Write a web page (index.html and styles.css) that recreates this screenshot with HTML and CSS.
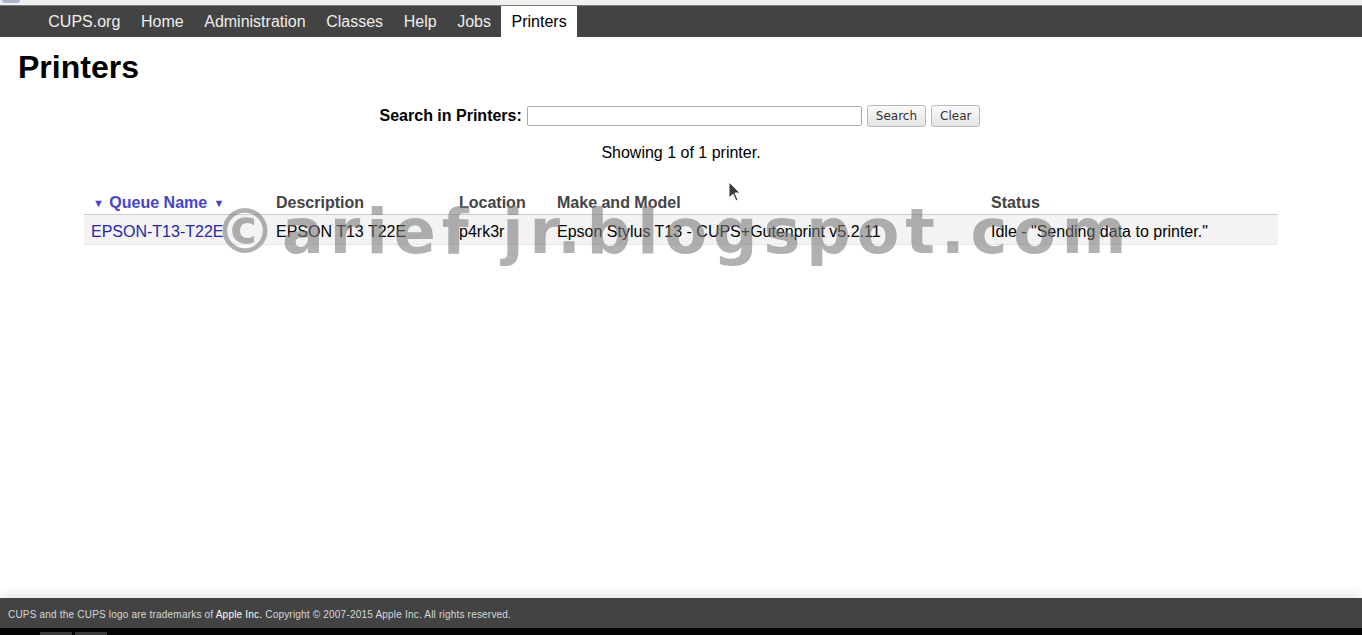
FILE: index.html
```html
<!DOCTYPE html>
<html>
	<head>
		<meta charset="UTF-8">
		<title>Printers - CUPS 2.1.0</title>
		<link rel="stylesheet" href="styles.css">
	</head>
	<body>
		<div class="topstrip"><span class="appicon"></span></div>
		<ul class="header">
			<li><a href="#">CUPS.org</a></li>
			<li><a href="#">Home</a></li>
			<li><a href="#">Administration</a></li>
			<li><a href="#">Classes</a></li>
			<li><a href="#">Help</a></li>
			<li><a href="#">Jobs</a></li>
			<li class="active"><a href="#">Printers</a></li>
		</ul>

		<div class="body">
			<h1 class="title">Printers</h1>

			<form class="search">
				<label class="search-label">Search in Printers:</label>
				<input class="search-input" type="search">
				<button class="btn" type="button">Search</button>
				<button class="btn" type="button">Clear</button>
			</form>

			<p class="count">Showing 1 of 1 printer.</p>

			<table class="list">
				<thead>
					<tr>
						<th class="col-name"><a href="#"><span class="arrow">&#9660;</span> Queue Name <span class="arrow">&#9660;</span></a></th>
						<th class="col-desc">Description</th>
						<th class="col-loc">Location</th>
						<th class="col-model">Make and Model</th>
						<th class="col-status">Status</th>
					</tr>
				</thead>
				<tbody>
					<tr>
						<td><a href="#">EPSON-T13-T22E</a></td>
						<td>EPSON T13 T22E</td>
						<td>p4rk3r</td>
						<td>Epson Stylus T13 - CUPS+Gutenprint v5.2.11</td>
						<td>Idle - "Sending data to printer."</td>
					</tr>
				</tbody>
			</table>

			<div class="watermark">&copy;arief jr.blogspot.com</div>

			<svg class="pointer" width="14" height="22" viewBox="0 0 14 22">
				<path d="M1 1 L1 17 L5 13 L8 20 L10 19 L7 12 L12 12 Z" fill="#3a3a3a" stroke="#fff" stroke-width="1"/>
			</svg>
		</div>

		<div class="trailer">
			CUPS and the CUPS logo are trademarks of <a href="#">Apple Inc.</a> Copyright &copy; 2007-2015 Apple Inc. All rights reserved.
		</div>
		<div class="taskbar">
			<span class="task"></span>
			<span class="task"></span>
		</div>
	</body>
</html>
```

FILE: styles.css
```css
*{
	padding: 0;
	margin: 0;
	box-sizing: border-box;
}
ul{
	list-style: none;
}
html, body{
	height: 100%;
}
body{
	display: flex;
	flex-direction: column;
	font-family: "Liberation Sans", Arial, sans-serif;
	font-size: 16px;
	color: #000;
	background: #fff;
	overflow: hidden;
}
a{
	text-decoration: none;
}

/* browser chrome above the page */
.topstrip{
	height: 6px;
	background: #eef0f2;
	border-bottom: 1px solid #7a7a7a;
	position: relative;
}
.appicon{
	display: block;
	width: 18px;
	height: 3px;
	background: #7c93b6;
	border-radius: 0 0 6px 6px;
	margin-left: 2px;
	opacity: .6;
}

/* navigation bar */
.header{
	display: flex;
	height: 31px;
	padding-left: 38px;
	background: #434343;
}
.header li a{
	display: block;
	height: 31px;
	line-height: 31px;
	padding: 0 10.3px;
	color: #eee;
	font-size: 16px;
}
.header li.active a{
	background: #fff;
	color: #000;
}

/* page content */
.body{
	flex: 1;
	position: relative;
	padding: 11px 18px 0;
}
.title{
	font-size: 32px;
	font-weight: bold;
	line-height: 38px;
}
.search{
	display: flex;
	align-items: center;
	justify-content: center;
	margin-top: 18px;
	height: 24px;
	padding-right: 2px;
}
.search-label{
	font-weight: bold;
	margin-right: 5px;
}
.search-input{
	width: 335px;
	height: 20px;
	border: 1px solid #aaa;
	border-radius: 2px;
	background: #fff;
	margin-right: 5px;
}
.btn{
	height: 22px;
	padding: 0 8px;
	font-family: "DejaVu Sans", sans-serif;
	font-size: 12px;
	color: #333;
	border: 1px solid #b8b8b8;
	border-radius: 3px;
	background: linear-gradient(#fbfbfb, #e4e4e4);
	margin-right: 5px;
}
.btn:last-child{
	margin-right: 0;
}
.count{
	text-align: center;
	margin-top: 15px;
	line-height: 20px;
}

/* printer table */
.list{
	border-collapse: collapse;
	margin: 28px 66px 0;
	width: 1194px;
}
.list th{
	text-align: left;
	font-weight: bold;
	color: #444;
	height: 23px;
	padding: 1px 7px 0;
	vertical-align: middle;
	border-bottom: 1px solid #ccc;
}
.list th a{
	color: #4444cc;
}
.list .arrow{
	font-size: 11px;
	vertical-align: 1px;
	margin: 0 1px 0 2px;
}
.list .col-name{ width: 185px; }
.list .col-desc{ width: 183px; }
.list .col-loc{ width: 98px; }
.list .col-model{ width: 434px; }
.list td{
	height: 30px;
	padding: 6px 7px 0;
	background: #f3f3f3;
	border-bottom: 1px solid #e8e8e8;
	white-space: nowrap;
}
.list td a{
	color: #2626a8;
}

.watermark{
	position: absolute;
	left: 214px;
	top: 164px;
	font-family: "DejaVu Sans", sans-serif;
	font-size: 62px;
	font-weight: bold;
	line-height: 1;
	letter-spacing: 6px;
	color: rgba(120,120,120,.58);
	white-space: nowrap;
	pointer-events: none;
}
.pointer{
	position: absolute;
	left: 728px;
	top: 144px;
}

/* footer */
.trailer{
	height: 30px;
	line-height: 30px;
	padding: 2px 0 0 8px;
	background: #434343;
	color: #d8d8d8;
	font-size: 10px;
	letter-spacing: .2px;
	box-shadow: 0 -8px 8px -2px rgba(0,0,0,.08);
}
.trailer a{
	color: #fff;
}
.taskbar{
	height: 7px;
	background: #050505;
	display: flex;
	gap: 3px;
	padding-left: 40px;
	padding-top: 4px;
}
.task{
	width: 32px;
	height: 3px;
	background: #3a3a3a;
}
```
